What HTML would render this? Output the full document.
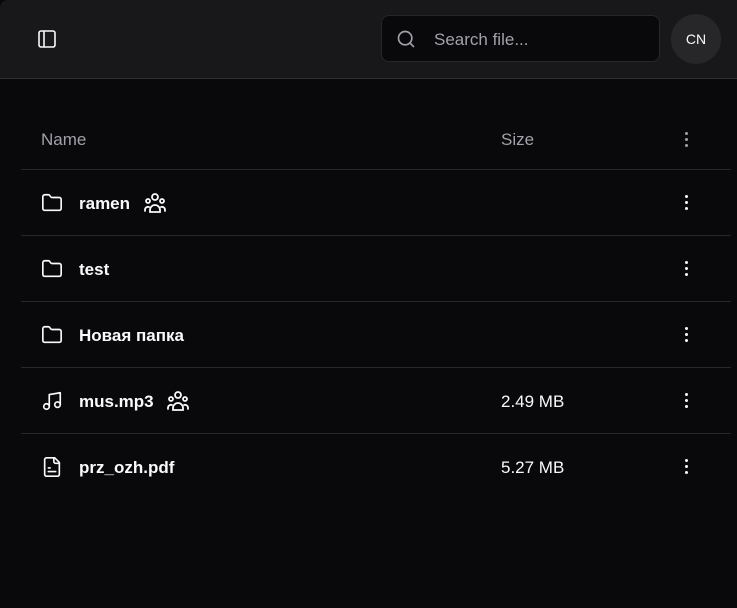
<!DOCTYPE html>
<html><head><meta charset="utf-8">
<style>
*{margin:0;padding:0;box-sizing:border-box}
html,body{width:737px;height:608px;overflow:hidden;background:#09090b;font-family:"Liberation Sans",Arial,sans-serif;color:#fafafa}
.hdr{position:absolute;left:0;top:0;width:737px;height:79px;background:#18181b;border-bottom:1px solid #2e2e33;border-top-left-radius:8px}
.tog{position:absolute;left:38px;top:30px}
.search{position:absolute;left:381px;top:15px;width:279px;height:47px;border:1px solid #27272a;border-radius:8px;background:#09090b}
.search svg{position:absolute;left:14px;top:13px}
.search span{position:absolute;left:52px;top:14px;font-size:17px;color:#a1a1aa}
.av{position:absolute;left:671px;top:14px;width:50px;height:50px;border-radius:50%;background:#27272a;color:#fafafa;font-size:14px;display:flex;align-items:center;justify-content:center}
.th{position:absolute;left:21px;top:107px;width:710px;height:63px;border-bottom:1px solid #27272a}
.th .n{position:absolute;left:20px;top:23px;font-size:17px;color:#a1a1aa}
.th .s{position:absolute;left:480px;top:23px;font-size:17px;color:#a1a1aa}
.row{position:absolute;left:21px;width:710px;height:66px;border-bottom:1px solid #27272a}
.row .ic{position:absolute;left:20px;top:22px}
.row .nm{position:absolute;left:58px;top:24px;font-size:17px;font-weight:bold}
.row .sz{position:absolute;left:480px;top:24px;font-size:17px}
.row .sh{position:absolute;top:21px}
.dots{position:absolute;left:664px;}
.dots i{display:block;width:3px;height:3px;border-radius:50%;background:#fafafa;margin-bottom:3px}
</style></head><body>
<div class="hdr">
 <svg class="tog" width="18" height="18" viewBox="0 0 18 18" fill="none" stroke="#fafafa" stroke-width="1.6"><rect x="1" y="1" width="16" height="16" rx="2"/><path d="M6 1v16"/></svg>
 <div class="search"><svg width="20" height="20" viewBox="0 0 24 24" fill="none" stroke="#a1a1aa" stroke-width="2" stroke-linecap="round"><circle cx="11" cy="11" r="8"/><path d="M21 21l-4.3-4.3"/></svg><span>Search file...</span></div>
 <div class="av">CN</div>
</div>
<div class="th"><span class="n">Name</span><span class="s">Size</span><div class="dots" style="top:25px"><i style="background:#a1a1aa"></i><i style="background:#a1a1aa"></i><i style="background:#a1a1aa"></i></div></div>

<div class="row" style="top:170px">
 <svg class="ic" width="22" height="22" viewBox="0 0 24 24" fill="none" stroke="#fafafa" stroke-width="1.8" stroke-linejoin="round"><path d="M20 20a2 2 0 0 0 2-2V8a2 2 0 0 0-2-2h-7.9a2 2 0 0 1-1.69-.9L9.6 3.9A2 2 0 0 0 7.93 3H4a2 2 0 0 0-2 2v13a2 2 0 0 0 2 2Z"/></svg>
 <span class="nm">ramen</span>
 <svg class="sh" style="left:122px" width="24" height="24" viewBox="0 0 24 24" fill="none" stroke="#fafafa" stroke-width="1.8" stroke-linecap="round"><circle cx="12" cy="6" r="3"/><circle cx="5" cy="10" r="2"/><circle cx="19" cy="10" r="2"/><path d="M7 21v-2a5 5 0 0 1 10 0v2Z"/><path d="M2 20v-1a3 3 0 0 1 4-3"/><path d="M22 20v-1a3 3 0 0 0-4-3"/></svg>
 <div class="dots" style="top:25px"><i></i><i></i><i></i></div>
</div>
<div class="row" style="top:236px">
 <svg class="ic" width="22" height="22" viewBox="0 0 24 24" fill="none" stroke="#fafafa" stroke-width="1.8" stroke-linejoin="round"><path d="M20 20a2 2 0 0 0 2-2V8a2 2 0 0 0-2-2h-7.9a2 2 0 0 1-1.69-.9L9.6 3.9A2 2 0 0 0 7.93 3H4a2 2 0 0 0-2 2v13a2 2 0 0 0 2 2Z"/></svg>
 <span class="nm">test</span>
 <div class="dots" style="top:25px"><i></i><i></i><i></i></div>
</div>
<div class="row" style="top:302px">
 <svg class="ic" width="22" height="22" viewBox="0 0 24 24" fill="none" stroke="#fafafa" stroke-width="1.8" stroke-linejoin="round"><path d="M20 20a2 2 0 0 0 2-2V8a2 2 0 0 0-2-2h-7.9a2 2 0 0 1-1.69-.9L9.6 3.9A2 2 0 0 0 7.93 3H4a2 2 0 0 0-2 2v13a2 2 0 0 0 2 2Z"/></svg>
 <span class="nm">Новая папка</span>
 <div class="dots" style="top:25px"><i></i><i></i><i></i></div>
</div>
<div class="row" style="top:368px">
 <svg class="ic" width="22" height="22" viewBox="0 0 24 24" fill="none" stroke="#fafafa" stroke-width="1.8" stroke-linecap="round" stroke-linejoin="round"><path d="M9 18V5l12-2v13"/><circle cx="6" cy="18" r="3"/><circle cx="18" cy="16" r="3"/></svg>
 <span class="nm">mus.mp3</span>
 <svg class="sh" style="left:145px" width="24" height="24" viewBox="0 0 24 24" fill="none" stroke="#fafafa" stroke-width="1.8" stroke-linecap="round"><circle cx="12" cy="6" r="3"/><circle cx="5" cy="10" r="2"/><circle cx="19" cy="10" r="2"/><path d="M7 21v-2a5 5 0 0 1 10 0v2Z"/><path d="M2 20v-1a3 3 0 0 1 4-3"/><path d="M22 20v-1a3 3 0 0 0-4-3"/></svg>
 <span class="sz">2.49 MB</span>
 <div class="dots" style="top:25px"><i></i><i></i><i></i></div>
</div>
<div class="row" style="top:434px;border-bottom:none">
 <svg class="ic" width="22" height="22" viewBox="0 0 24 24" fill="none" stroke="#fafafa" stroke-width="1.8" stroke-linecap="round" stroke-linejoin="round"><path d="M15 2H6a2 2 0 0 0-2 2v16a2 2 0 0 0 2 2h12a2 2 0 0 0 2-2V7Z"/><path d="M14 2v4a2 2 0 0 0 2 2h4"/><path d="M10 13H8"/><path d="M16 17H8"/></svg>
 <span class="nm">prz_ozh.pdf</span>
 <span class="sz">5.27 MB</span>
 <div class="dots" style="top:25px"><i></i><i></i><i></i></div>
</div>
</body></html>
